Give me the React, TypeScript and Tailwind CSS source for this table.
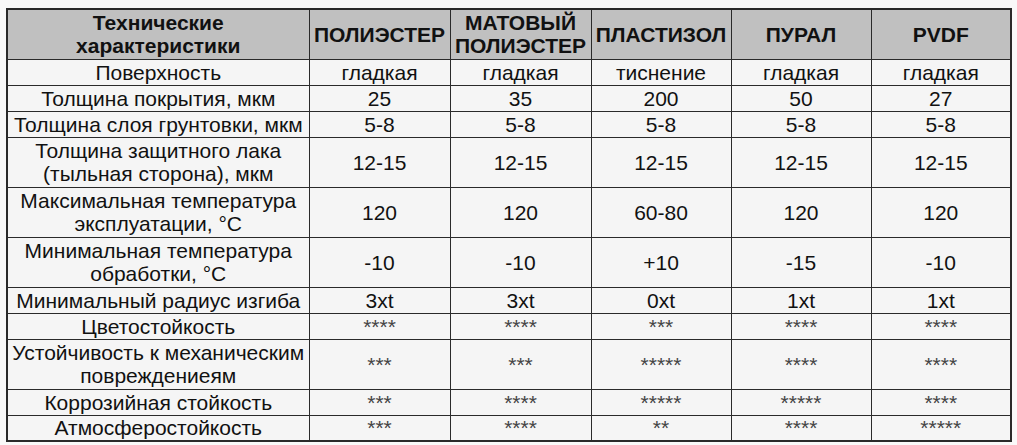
import React from 'react';

interface Row {
  label: string[];
  values: string[];
  tall?: boolean;
  stars?: boolean;
}

const columns: string[][] = [
  ['ПОЛИЭСТЕР'],
  ['МАТОВЫЙ', 'ПОЛИЭСТЕР'],
  ['ПЛАСТИЗОЛ'],
  ['ПУРАЛ'],
  ['PVDF'],
];

const rows: Row[] = [
  { label: ['Поверхность'], values: ['гладкая', 'гладкая', 'тиснение', 'гладкая', 'гладкая'] },
  { label: ['Толщина покрытия, мкм'], values: ['25', '35', '200', '50', '27'] },
  { label: ['Толщина слоя грунтовки, мкм'], values: ['5-8', '5-8', '5-8', '5-8', '5-8'] },
  { label: ['Толщина защитного лака', '(тыльная сторона), мкм'], values: ['12-15', '12-15', '12-15', '12-15', '12-15'], tall: true },
  { label: ['Максимальная температура', 'эксплуатации, °C'], values: ['120', '120', '60-80', '120', '120'], tall: true },
  { label: ['Минимальная температура', 'обработки, °C'], values: ['-10', '-10', '+10', '-15', '-10'], tall: true },
  { label: ['Минимальный радиус изгиба'], values: ['3xt', '3xt', '0xt', '1xt', '1xt'] },
  { label: ['Цветостойкость'], values: ['****', '****', '***', '****', '****'], stars: true },
  { label: ['Устойчивость к механическим', 'повреждениеям'], values: ['***', '***', '*****', '****', '****'], tall: true, stars: true },
  { label: ['Коррозийная стойкость'], values: ['***', '****', '*****', '*****', '****'], stars: true },
  { label: ['Атмосферостойкость'], values: ['***', '****', '**', '****', '*****'], stars: true },
];

const cell = 'border border-[#2a2a2a] p-0 text-center align-middle whitespace-nowrap';

export default function App() {
  return (
    <div className="min-h-screen bg-[#f9f9f9] pt-[8px] pl-[6px] font-['Liberation_Sans',Arial,sans-serif] text-[#111]">
      <table className="table-fixed border-collapse border-2 border-[#2a2a2a] text-[21px] leading-[23px]">
        <colgroup>
          <col className="w-[302px]" />
          <col className="w-[141px]" />
          <col className="w-[141px]" />
          <col className="w-[140px]" />
          <col className="w-[140px]" />
          <col className="w-[140px]" />
        </colgroup>
        <thead>
          <tr className="h-[50px] bg-[#c0c0c0] text-[21px] font-bold">
            <th className={cell}>
              Технические
              <br />
              характеристики
            </th>
            {columns.map((c, i) => (
              <th key={i} className={cell}>
                {c.map((line, j) => (
                  <div key={j}>{line}</div>
                ))}
              </th>
            ))}
          </tr>
        </thead>
        <tbody>
          {rows.map((r, i) => (
            <tr key={i} className={`bg-[#f5f5f5] ${r.tall ? 'h-[50px]' : 'h-[26px]'}`}>
              <td className={cell}>
                {r.label.map((line, j) => (
                  <div key={j}>{line}</div>
                ))}
              </td>
              {r.values.map((v, j) => (
                <td key={j} className={`${cell} ${r.stars ? 'text-[#444]' : ''}`}>
                  {v}
                </td>
              ))}
            </tr>
          ))}
        </tbody>
      </table>
    </div>
  );
}
